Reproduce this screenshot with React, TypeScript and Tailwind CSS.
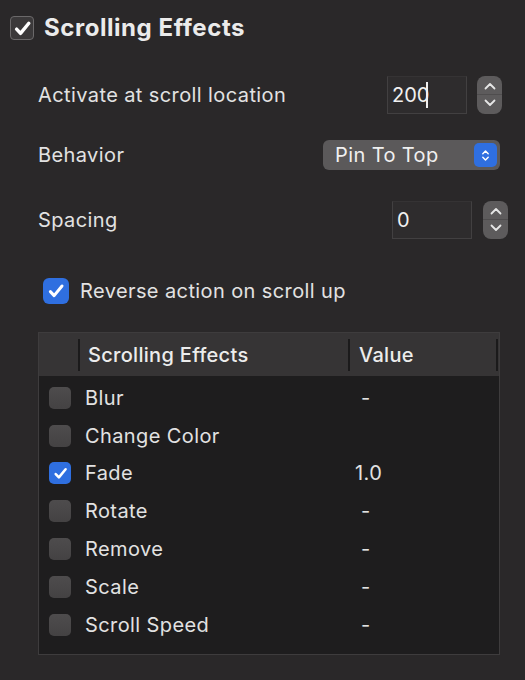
import React from 'react'

type Effect = { name: string; value: string; checked: boolean }

const effects: Effect[] = [
  { name: 'Blur', value: '-', checked: false },
  { name: 'Change Color', value: '', checked: false },
  { name: 'Fade', value: '1.0', checked: true },
  { name: 'Rotate', value: '-', checked: false },
  { name: 'Remove', value: '-', checked: false },
  { name: 'Scale', value: '-', checked: false },
  { name: 'Scroll Speed', value: '-', checked: false }
]

const label = 'text-[20px] tracking-[0.4px]'

function Check({ className, width = 2.4 }: { className?: string; width?: number }) {
  return (
    <svg viewBox="0 0 16 16" className={className} fill="none">
      <path d="M3.5 8.5l3 3.2L12.8 4" stroke="white" strokeWidth={width} strokeLinecap="round" strokeLinejoin="round" />
    </svg>
  )
}

function Checkbox({ checked, size = 'sm' }: { checked: boolean; size?: 'sm' | 'lg' }) {
  const box = size === 'lg' ? 'w-[26px] h-[26px] rounded-[6px]' : 'w-[22px] h-[22px] rounded-[5px]'
  if (checked) {
    return (
      <div className={`${box} bg-[#2f6fe0] flex items-center justify-center shrink-0`}>
        <Check className={size === 'lg' ? 'w-[20px] h-[20px]' : 'w-[17px] h-[17px]'} />
      </div>
    )
  }
  return <div className={`${box} bg-gradient-to-b from-[#4e4c4d] to-[#444243] shrink-0`} />
}

function Stepper() {
  return (
    <div className="w-[25px] h-[38px] rounded-[8px] bg-[#5d5b5c] flex flex-col items-center justify-center gap-[4px]">
      <svg viewBox="0 0 12 8" className="w-[12px] h-[8px]" fill="none">
        <path d="M1.5 6.5L6 2l4.5 4.5" stroke="#e6e6e6" strokeWidth="1.8" strokeLinecap="round" strokeLinejoin="round" />
      </svg>
      <div className="w-full h-px bg-[#4f4d4e]" />
      <svg viewBox="0 0 12 8" className="w-[12px] h-[8px]" fill="none">
        <path d="M1.5 1.5L6 6l4.5-4.5" stroke="#e6e6e6" strokeWidth="1.8" strokeLinecap="round" strokeLinejoin="round" />
      </svg>
    </div>
  )
}

function NumberField({ value, cursor }: { value: string; cursor?: boolean }) {
  return (
    <div className="w-[80px] h-[38px] bg-[#2e2c2d] border border-[#424041] border-t-[#353334] flex items-center pl-[4px] text-[20px] text-[#f0f0f0]">
      <span>{value}</span>
      {cursor && <span className="w-[2px] h-[26px] bg-[#f0f0f0] -ml-[3px]" />}
    </div>
  )
}

export default function App() {
  return (
    <div
      className="w-[525px] h-[680px] bg-[#2a2829] text-[#e2e2e2] pt-[15px] overflow-hidden"
      style={{ fontFamily: 'Inter, "Noto Sans", sans-serif' }}
    >
      {/* Section title */}
      <div className="flex items-center h-[26px] pl-[10px] gap-[10px]">
        <div className="w-[24px] h-[24px] rounded-[4px] bg-[#3b393a] border border-[#6b696a] flex items-center justify-center">
          <Check className="w-[21px] h-[21px]" width={2.6} />
        </div>
        <span className="text-[24px] font-bold text-[#ebebeb] tracking-[0.55px]">Scrolling Effects</span>
      </div>

      {/* Activate at scroll location */}
      <div className="flex items-center justify-between h-[39px] mt-[34px] pl-[38px] pr-[23px]">
        <span className={label}>Activate at scroll location</span>
        <div className="flex items-center gap-[10px]">
          <NumberField value="200" cursor />
          <Stepper />
        </div>
      </div>

      {/* Behavior */}
      <div className="flex items-center justify-between h-[30px] mt-[26px] pl-[38px] pr-[25px]">
        <span className={label}>Behavior</span>
        <div className="w-[177px] h-[30px] rounded-[6px] bg-[#5b595a] flex items-center justify-between pl-[12px] pr-[3px]">
          <span className={`${label} text-[#f0f0f0]`}>Pin To Top</span>
          <div className="w-[23px] h-[24px] rounded-[5px] bg-[#2f6fe0] flex items-center justify-center">
            <svg viewBox="0 0 10 14" className="w-[9px] h-[13px]" fill="none">
              <path d="M2 5l3-3 3 3M2 9l3 3 3-3" stroke="white" strokeWidth="1.6" strokeLinecap="round" strokeLinejoin="round" />
            </svg>
          </div>
        </div>
      </div>

      {/* Spacing */}
      <div className="flex items-center justify-between h-[39px] mt-[30px] pl-[38px] pr-[17px]">
        <span className={label}>Spacing</span>
        <div className="flex items-center gap-[11px]">
          <NumberField value="0" />
          <Stepper />
        </div>
      </div>

      {/* Reverse action */}
      <div className="flex items-center h-[27px] mt-[38px] pl-[43px] gap-[11px]">
        <Checkbox checked size="lg" />
        <span className={label}>Reverse action on scroll up</span>
      </div>

      {/* Effects table */}
      <div className="mt-[28px] ml-[38px] w-[462px] h-[323px] border border-[#3e3c3d] bg-[#1e1d1e]">
        <div className="flex items-center h-[43px] bg-[#363435] text-[20px] tracking-[0.3px] font-medium text-[#ececec]">
          <div className="w-[39px] shrink-0" />
          <div className="w-[270px] h-[32px] flex items-center border-l-2 border-[#1b1a1b] pl-[8px]">Scrolling Effects</div>
          <div className="flex-1 h-[32px] flex items-center border-l-2 border-r-2 border-[#1b1a1b] pl-[9px] mr-[1px]">Value</div>
        </div>
        <div className="pt-[3px]">
          {effects.map((e) => (
            <div key={e.name} className="flex items-center h-[37.8px]">
              <div className="w-[46px] pl-[10px] shrink-0 flex">
                <Checkbox checked={e.checked} />
              </div>
              <span className={`w-[270px] ${label}`}>{e.name}</span>
              <span className={`${label} ${e.value === '-' ? 'pl-[6px]' : ''}`}>{e.value}</span>
            </div>
          ))}
        </div>
      </div>
    </div>
  )
}
